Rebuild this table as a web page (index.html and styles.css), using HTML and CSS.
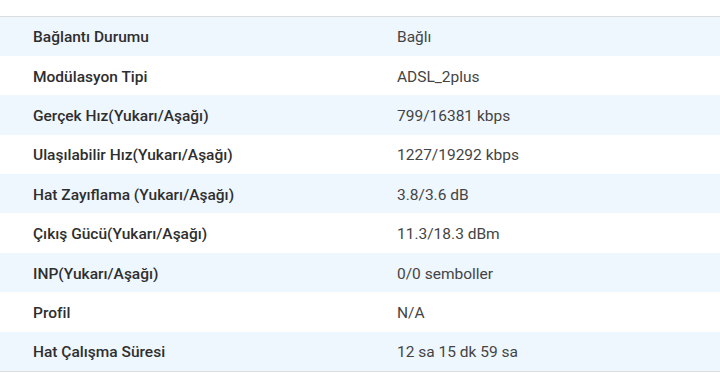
FILE: index.html
```html
<!DOCTYPE html>
<html lang="tr">
<head>
<meta charset="utf-8">
<link rel="stylesheet" href="styles.css">
</head>
<body>
<div class="wrap">
  <table class="info">
    <tbody>
      <tr><th>Bağlantı Durumu</th><td>Bağlı</td></tr>
      <tr><th>Modülasyon Tipi</th><td>ADSL_2plus</td></tr>
      <tr><th>Gerçek Hız(Yukarı/Aşağı)</th><td>799/16381 kbps</td></tr>
      <tr><th>Ulaşılabilir Hız(Yukarı/Aşağı)</th><td>1227/19292 kbps</td></tr>
      <tr><th>Hat Zayıflama (Yukarı/Aşağı)</th><td>3.8/3.6 dB</td></tr>
      <tr><th>Çıkış Gücü(Yukarı/Aşağı)</th><td>11.3/18.3 dBm</td></tr>
      <tr><th>INP(Yukarı/Aşağı)</th><td>0/0 semboller</td></tr>
      <tr><th>Profil</th><td>N/A</td></tr>
      <tr><th>Hat Çalışma Süresi</th><td>12 sa 15 dk 59 sa</td></tr>
    </tbody>
  </table>
</div>
</body>
</html>
```
FILE: styles.css
```css
html, body {
  margin: 0;
  padding: 0;
  background: #ffffff;
}
body {
  font-family: Roboto, "Noto Sans", Arial, sans-serif;
  font-size: 15.5px;
  color: #333;
}
.wrap {
  padding-top: 16px;
}
.info {
  width: 100%;
  border-collapse: collapse;
  border-top: 1px solid #dedede;
  border-bottom: 1px solid #dedede;
}
.info tr {
  height: 39.4px;
}
.info tr:nth-child(odd) {
  background: #eef6fe;
}
.info th {
  text-align: left;
  font-weight: 500;
  color: #2e2e2e;
  padding: 2px 0 0 33px;
  width: 364px;
  vertical-align: middle;
}
.info td {
  padding: 2px 0 0 0;
  color: #444;
  vertical-align: middle;
}
```
